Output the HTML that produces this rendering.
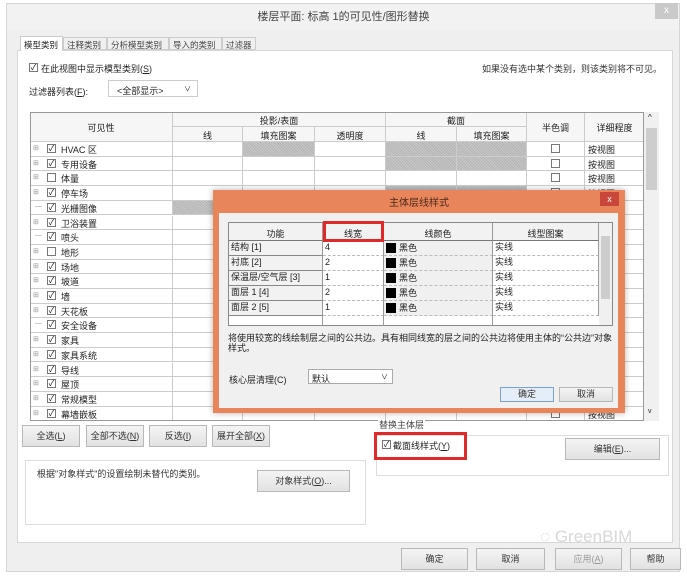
<!DOCTYPE html>
<html><head><meta charset="utf-8"><style>
*{box-sizing:border-box;margin:0;padding:0}
body{width:687px;height:578px;background:#fff;position:relative;overflow:hidden;font-family:"Liberation Sans","Noto Sans CJK SC",sans-serif;font-size:9px;color:#222}
.a{position:absolute}
.tab{white-space:nowrap;font-size:8.5px;overflow:hidden}
.btn{position:absolute;background:linear-gradient(#f4f4f4,#e2e2e2);border:1px solid #b8b8b8;text-align:center;font-size:9px;color:#333}
.hatch{background-color:#bdbdbd;background-image:repeating-linear-gradient(45deg,#c8c8c8 0 1px,#b4b4b4 1px 2px)}
.cb{position:absolute;width:9px;height:9px;border:1px solid #777;background:#fff;font-size:8px;line-height:7px;text-align:center;color:#111}
.cell{position:absolute;border-right:1px solid #ccc;border-bottom:1px solid #ccc}
</style></head><body>
<div class="a" style="left:6px;top:3px;width:674px;height:569px;background:#efefef;border:1px solid #d6d6d6"></div>
<div class="a" style="left:7px;top:4px;width:672px;height:26px;background:#f2f2f2"></div>
<div class="a" style="left:0;top:8px;width:687px;text-align:center;font-size:11px;color:#444">楼层平面: 标高 1的可见性/图形替换</div>
<div class="a" style="left:655px;top:3px;width:23px;height:16px;background:#c9c9c9;color:#fff;text-align:center;font-size:10px;line-height:16px">x</div>
<div class="a" style="left:17px;top:50px;width:656px;height:493px;background:#fff;border:1px solid #d8d8d8"></div>
<div class="a tab" style="left:20px;top:36px;width:43px;height:15px;background:#fff;border:1px solid #ccc;border-bottom:none;padding:2px 3px">模型类别</div>
<div class="a tab" style="left:63px;top:37px;width:44px;height:13px;background:#f0f0f0;border:1px solid #ccc;padding:1px 3px;color:#444">注释类别</div>
<div class="a tab" style="left:107px;top:37px;width:62px;height:13px;background:#f0f0f0;border:1px solid #ccc;padding:1px 3px;color:#444">分析模型类别</div>
<div class="a tab" style="left:169px;top:37px;width:53px;height:13px;background:#f0f0f0;border:1px solid #ccc;padding:1px 3px;color:#444">导入的类别</div>
<div class="a tab" style="left:222px;top:37px;width:34px;height:13px;background:#f0f0f0;border:1px solid #ccc;padding:1px 3px;color:#444">过滤器</div>
<div class="cb" style="left:29px;top:63px">✓</div>
<div class="a" style="left:41px;top:62px">在此视图中显示模型类别(<u>S</u>)</div>
<div class="a" style="left:482px;top:62px;color:#333">如果没有选中某个类别，则该类别将不可见。</div>
<div class="a" style="left:29px;top:85px">过滤器列表(<u>F</u>):</div>
<div class="a" style="left:108px;top:80px;width:90px;height:17px;border:1px solid #ccc;padding:3px 8px">&lt;全部显示&gt;<span style="position:absolute;right:6px;top:3px;font-size:7px">∨</span></div>
<div class="a" style="left:30px;top:112px;width:614px;height:309px;border:1px solid #999;background:#fff;overflow:hidden" id="t"></div>
<div class="a" style="left:644px;top:112px;width:15px;height:309px;background:#f0f0f0"></div>
<div class="a" style="left:646px;top:128px;width:11px;height:62px;background:#cdcdcd"></div>
<div class="a" style="left:648px;top:113px;font-size:8px">^</div>
<div class="a" style="left:648px;top:408px;font-size:7px">v</div>
<div class="a" style="left:213px;top:190px;width:412px;height:223px;background:#e8855a;box-shadow:0 0 6px rgba(0,0,0,.3)"></div>
<div class="a" style="left:213px;top:194px;width:412px;text-align:center;font-size:10px;color:#4a2a1a">主体层线样式</div>
<div class="a" style="left:600px;top:192px;width:19px;height:14px;background:#c9473a;color:#fff;text-align:center;font-size:9px;line-height:14px">x</div>
<div class="a" style="left:219px;top:213px;width:399px;height:195px;background:#f0f0f0"></div>
<div class="a" style="left:228px;top:222px;width:385px;height:104px;background:#fff;border:1px solid #888"></div>
<div id="sub"></div>
<div class="a" style="left:599px;top:223px;width:13px;height:102px;background:#f0f0f0"></div>
<div class="a" style="left:601px;top:236px;width:9px;height:63px;background:#cdcdcd"></div>
<div class="a" style="left:323px;top:221px;width:61px;height:21px;border:3px solid #e02a2a"></div>
<div class="a" style="left:228px;top:333px;width:385px;line-height:10px;color:#222">将使用较宽的线绘制层之间的公共边。具有相同线宽的层之间的公共边将使用主体的“公共边”对象样式。</div>
<div class="a" style="left:229px;top:373px">核心层清理(C)</div>
<div class="a" style="left:308px;top:369px;width:85px;height:15px;border:1px solid #aaa;background:#fff;padding:2px 3px">默认<span style="position:absolute;right:4px;top:2px;font-size:7px">∨</span></div>
<div class="btn" style="left:500px;top:387px;width:54px;height:15px;background:#e5eef8;border-color:#7aa2d0;line-height:13px">确定</div>
<div class="btn" style="left:559px;top:387px;width:54px;height:15px;line-height:13px">取消</div>
<div class="btn" style="left:22px;top:425px;width:58px;height:22px;line-height:20px">全选(<u>L</u>)</div>
<div class="btn" style="left:86px;top:425px;width:58px;height:22px;line-height:20px">全部不选(<u>N</u>)</div>
<div class="btn" style="left:149px;top:425px;width:58px;height:22px;line-height:20px">反选(<u>I</u>)</div>
<div class="btn" style="left:212px;top:425px;width:58px;height:22px;line-height:20px">展开全部(<u>X</u>)</div>
<div class="a" style="left:376px;top:435px;width:293px;height:41px;border:1px solid #ddd"></div>
<div class="a" style="left:378px;top:420px;background:#fff;padding:0 1px;color:#444;line-height:11px">替换主体层</div>
<div class="a" style="left:374px;top:432px;width:93px;height:28px;border:3px solid #e02a2a"></div>
<div class="cb" style="left:382px;top:440px">✓</div>
<div class="a" style="left:393px;top:439px">截面线样式(<u>Y</u>)</div>
<div class="btn" style="left:565px;top:438px;width:95px;height:22px;line-height:20px">编辑(<u>E</u>)...</div>
<div class="a" style="left:25px;top:460px;width:341px;height:65px;border:1px solid #ddd"></div>
<div class="a" style="left:37px;top:467px;color:#333">根据"对象样式"的设置绘制未替代的类别。</div>
<div class="btn" style="left:257px;top:470px;width:93px;height:22px;line-height:20px">对象样式(<u>O</u>)...</div>
<div class="a" style="left:540px;top:527px;font-size:17px;color:#d8d8d8">◌ GreenBIM</div>
<div class="btn" style="left:401px;top:548px;width:67px;height:22px;line-height:20px">确定</div>
<div class="btn" style="left:476px;top:548px;width:69px;height:22px;line-height:20px">取消</div>
<div class="btn" style="left:555px;top:548px;width:67px;height:22px;line-height:20px;color:#999">应用(<u>A</u>)</div>
<div class="btn" style="left:630px;top:548px;width:51px;height:22px;line-height:20px">帮助</div>
<script>
var T=document.getElementById('t');
var h='';
function c(x,y,w,hh,txt,cls,st){h+='<div class="cell '+(cls||'')+'" style="left:'+(x-31)+'px;top:'+(y-113)+'px;width:'+w+'px;height:'+hh+'px;'+(st||'')+'">'+(txt||'')+'</div>';}
var hs='background:#f6f6f6;text-align:center;';
c(30,112,143,30,'<div style="padding-top:9px">可见性</div>','',hs);
c(173,112,213,15,'<div style="padding-top:2px">投影/表面</div>','',hs);
c(386,112,141,15,'<div style="padding-top:2px">截面</div>','',hs);
c(527,112,58,30,'<div style="padding-top:9px">半色调</div>','',hs);
c(585,112,60,30,'<div style="padding-top:9px">详细程度</div>','',hs);
var sc=[[173,70,'线'],[243,72,'填充图案'],[315,71,'透明度'],[386,71,'线'],[457,70,'填充图案']];
sc.forEach(function(s){c(s[0],127,s[1],15,'<div style="padding-top:2px">'+s[2]+'</div>','',hs);});
var names=['HVAC 区','专用设备','体量','停车场','光栅图像','卫浴装置','喷头','地形','场地','坡道','墙','天花板','安全设备','家具','家具系统','导线','屋顶','常规模型','幕墙嵌板'];
var unc={2:1,7:1},noexp={4:1,6:1,12:1};
var g={0:[243,386,457],1:[386,457],3:[386,457],4:[173]};
for(var i=0;i<names.length;i++){
 var y=142+i*14.7;
 c(30,y,143,14.7,'<span style="position:absolute;left:3px;top:2px;color:#999;font-size:7px">'+(noexp[i]?'&nbsp;—':'⊞')+'</span><span class="cb" style="left:17px;top:2px">'+(unc[i]?'':'✓')+'</span><span style="position:absolute;left:31px;top:1px">'+names[i]+'</span>');
 sc.forEach(function(s){var gr=(g[i]||[]).indexOf(s[0])>=0;c(s[0],y,s[1],14.7,'',gr?'hatch':'');});
 c(527,y,58,14.7,'<span class="cb" style="left:24px;top:2px"></span>');
 c(585,y,60,14.7,'<span style="position:absolute;left:3px;top:1px">按视图</span>');
}
T.innerHTML=h;
var S='';
function d(x,y,w,hh,txt,st){S+='<div class="a" style="left:'+x+'px;top:'+y+'px;width:'+w+'px;height:'+hh+'px;border-right:1px solid #999;border-bottom:1px dashed #bbb;'+(st||'')+'">'+txt+'</div>';}
var hd='background:#f2f2f2;text-align:center;padding-top:4px;border-bottom:1px solid #777;';
d(229,223,94,18,'功能',hd);d(323,223,61,18,'线宽',hd);d(384,223,109,18,'线颜色',hd);d(493,223,106,18,'线型图案',hd);
var r=[['结构 [1]','4'],['衬底 [2]','2'],['保温层/空气层 [3]','1'],['面层 1 [4]','2'],['面层 2 [5]','1']];
r.forEach(function(a,i){var y=241+i*15;
d(229,y,94,15,'<span style="padding-left:2px">'+a[0]+'</span>','background:#f2f2f2;border-bottom:1px solid #888;line-height:13px');
d(323,y,61,15,'<span style="padding-left:2px">'+a[1]+'</span>','line-height:13px');
d(384,y,109,15,'<span style="display:inline-block;width:10px;height:10px;background:#000;margin:2px 3px 0 2px;vertical-align:top"></span>黑色','background:#f0f0f0;line-height:14px');
d(493,y,106,15,'<span style="padding-left:2px">实线</span>','line-height:13px');});
d(229,316,94,10,'','border-bottom:none');d(323,316,61,10,'','border-bottom:none');d(384,316,109,10,'','border-bottom:none');
document.getElementById('sub').innerHTML=S;
</script>
</body></html>
